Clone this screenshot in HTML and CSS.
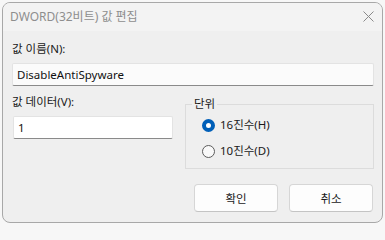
FILE: index.html
```html
<!DOCTYPE html>
<html lang="ko">
<head>
<meta charset="utf-8">
<title>DWORD(32비트) 값 편집</title>
<link rel="stylesheet" href="styles.css">
</head>
<body>
<div class="window">
  <div class="titlebar">
    <span class="title">DWORD(32비트) 값 편집</span>
    <span class="close" aria-label="닫기">
      <svg width="11" height="11" viewBox="0 0 11 11"><path d="M0.5 0.5 L10.5 10.5 M10.5 0.5 L0.5 10.5" stroke="#8a8a8a" stroke-width="1" fill="none"/></svg>
    </span>
  </div>
  <div class="content">
    <div class="label">값 이름(N):</div>
    <div class="textbox readonly">DisableAntiSpyware</div>
    <div class="row">
      <div class="col-left">
        <div class="label">값 데이터(V):</div>
        <div class="textbox data">1</div>
      </div>
      <fieldset class="group">
        <legend>단위</legend>
        <label class="radio"><span class="dot checked"></span>16진수(H)</label>
        <label class="radio"><span class="dot"></span>10진수(D)</label>
      </fieldset>
    </div>
    <div class="buttons">
      <div class="btn">확인</div>
      <div class="btn">취소</div>
    </div>
  </div>
</div>
</body>
</html>
```

FILE: styles.css
```css
html, body {
  margin: 0;
  padding: 0;
}
body {
  width: 385px;
  height: 225px;
  background: #f7f7f7;
  font-family: "Noto Sans", "Noto Sans CJK KR", sans-serif;
  font-size: 11.5px;
  color: #1a1a1a;
  overflow: hidden;
}
.window {
  margin: 2px 0 0 2px;
  width: 381px;
  height: 221px;
  box-sizing: border-box;
  border: 1px solid #a8a8a8;
  border-radius: 8px;
  background: #efefef;
  overflow: hidden;
}
.titlebar {
  height: 28px;
  background: #f3f3f3;
  display: flex;
  align-items: center;
  justify-content: space-between;
  padding: 0 8px 0 7px;
}
.title {
  color: #8e8e8e;
  font-size: 12px;
  line-height: 16px;
  margin-top: -1px;
}
.close {
  display: flex;
  margin-top: -2px;
}
.content {
  padding: 10px 8px 0 9px;
}
.label {
  line-height: 16px;
}
.textbox {
  box-sizing: border-box;
  height: 23px;
  border: 1px solid #e3e3e3;
  border-bottom-color: #8a8a8a;
  border-radius: 2px;
  padding: 0 4px;
  line-height: 21px;
  color: #111;
}
.readonly {
  margin-top: 6px;
  background: #fbfbfb;
}
.data {
  margin: 6px 0 0 1px;
  background: #ffffff;
  width: 160px;
}
.row {
  display: grid;
  grid-template-columns: 161px 189px;
  column-gap: 12px;
  margin-top: 8px;
  align-items: start;
}
.group {
  margin: 2px 0 0 0;
  padding: 5px 0 8px 6px;
  border: 1px solid #dcdcdc;
  border-radius: 0;
  min-width: 0;
  height: 73px;
  box-sizing: border-box;
  display: flex;
  flex-direction: column;
  gap: 10px;
}
.group legend {
  padding: 0 2px;
  line-height: 16px;
}
.radio {
  display: flex;
  align-items: center;
  gap: 5px;
  line-height: 16px;
  padding-left: 10px;
}
.dot {
  width: 13px;
  height: 13px;
  box-sizing: border-box;
  border-radius: 50%;
  border: 1px solid #5c5c5c;
  background: #f9f9f9;
}
.dot.checked {
  border: 4px solid #005fb8;
  background: #ffffff;
}
.buttons {
  display: flex;
  justify-content: flex-end;
  gap: 11px;
  margin-top: 15px;
  padding-right: 1px;
}
.btn {
  width: 84px;
  height: 28px;
  box-sizing: border-box;
  border: 1px solid #d6d6d6;
  border-bottom-color: #c4c4c4;
  border-radius: 4px;
  background: #fdfdfd;
  display: flex;
  align-items: center;
  justify-content: center;
  color: #1a1a1a;
}
```
